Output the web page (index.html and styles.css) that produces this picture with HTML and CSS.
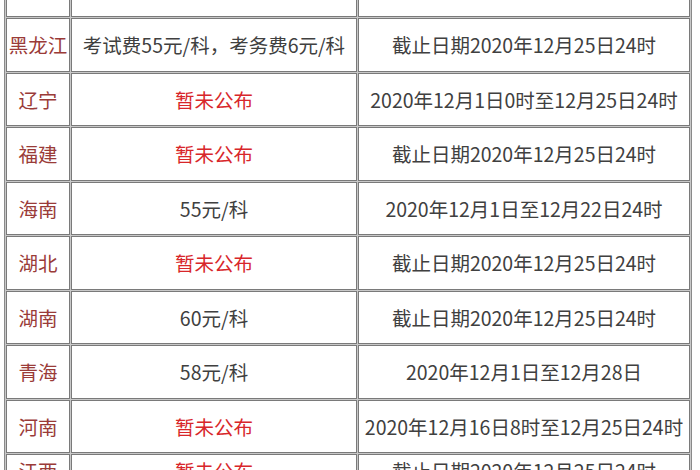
FILE: index.html
```html
<!DOCTYPE html>
<html lang="zh-CN">
<head>
<meta charset="utf-8">
<title>考试费用</title>
<link rel="stylesheet" href="styles.css">
</head>
<body>
<table class="fees">
  <tr><td class="prov"></td><td class="fee"></td><td class="date"></td></tr>
  <tr><td class="prov">黑龙江</td><td class="fee">考试费55元/科，考务费6元/科</td><td class="date">截止日期2020年12月25日24时</td></tr>
  <tr><td class="prov">辽宁</td><td class="fee pending">暂未公布</td><td class="date">2020年12月1日0时至12月25日24时</td></tr>
  <tr><td class="prov">福建</td><td class="fee pending">暂未公布</td><td class="date">截止日期2020年12月25日24时</td></tr>
  <tr><td class="prov">海南</td><td class="fee">55元/科</td><td class="date">2020年12月1日至12月22日24时</td></tr>
  <tr><td class="prov">湖北</td><td class="fee pending">暂未公布</td><td class="date">截止日期2020年12月25日24时</td></tr>
  <tr><td class="prov">湖南</td><td class="fee">60元/科</td><td class="date">截止日期2020年12月25日24时</td></tr>
  <tr><td class="prov">青海</td><td class="fee">58元/科</td><td class="date">2020年12月1日至12月28日</td></tr>
  <tr><td class="prov">河南</td><td class="fee pending">暂未公布</td><td class="date">2020年12月16日8时至12月25日24时</td></tr>
  <tr class="last"><td class="prov">江西</td><td class="fee pending">暂未公布</td><td class="date">截止日期2020年12月25日24时</td></tr>
</table>
</body>
</html>
```

FILE: styles.css
```css
html, body {
  margin: 0;
  padding: 0;
  background: #ffffff;
  overflow: hidden;
}

body {
  font-family: "Noto Sans CJK SC", "Noto Sans", sans-serif;
  color: #404040;
}

.fees {
  margin: -38.5px 0 0 4px;
  border-collapse: separate;
  border-spacing: 1px;
  border: 1px solid #8a8a8a;
  background: #c8c8c8;
  table-layout: fixed;
}

.fees td {
  background: #ffffff;
  border: 1px solid #7a7a7a;
  height: 51.5px;
  padding: 0;
  text-align: center;
  vertical-align: middle;
  font-size: 19.5px;
  line-height: 1;
  white-space: nowrap;
  overflow: hidden;
}

.fees td.prov {
  width: 62px;
  color: #9a3b38;
}

.fees td.fee {
  width: 284px;
}

.fees td.date {
  width: 330px;
}

.fees td.pending {
  color: #d8262a;
}

.fees tr.last td {
  vertical-align: top;
  padding-top: 6px;
  height: 45.5px;
}
```
